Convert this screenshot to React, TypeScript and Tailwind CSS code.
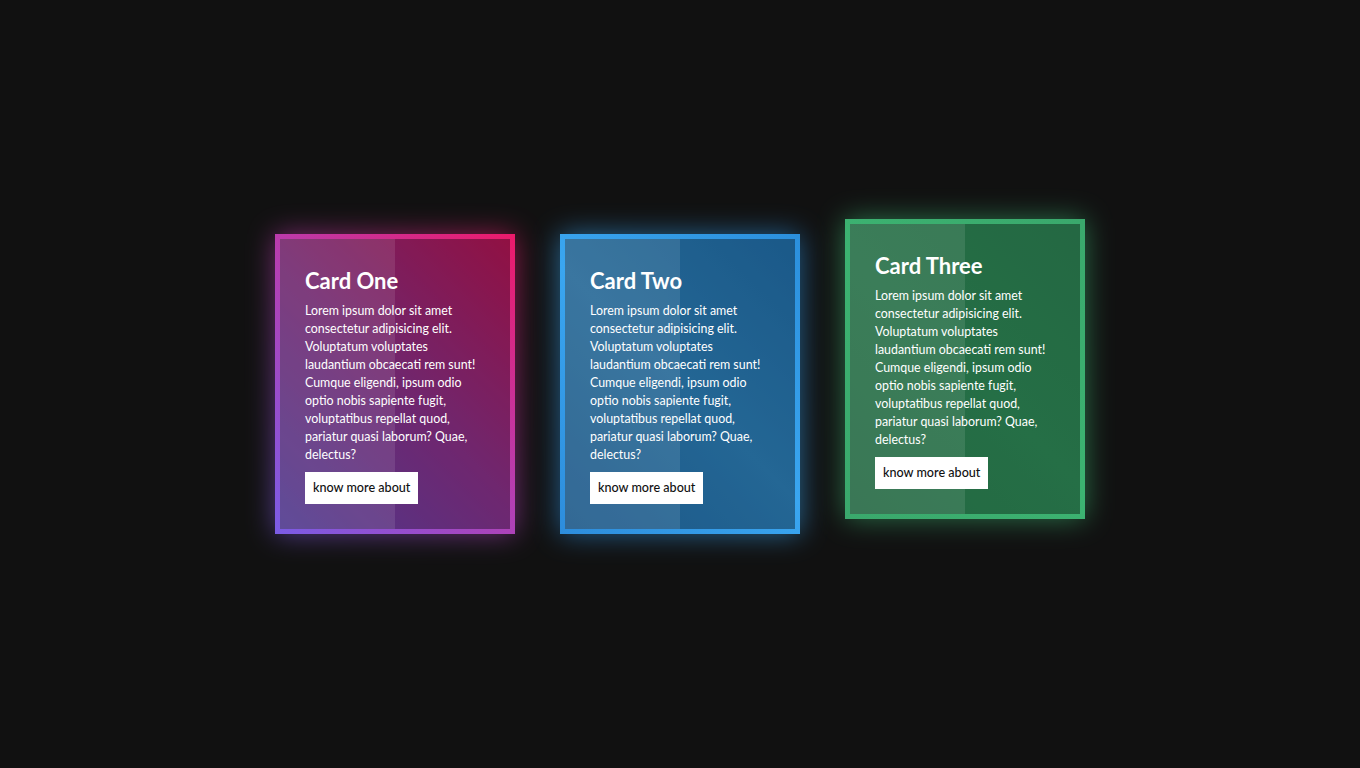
import React from 'react';

type Card = {
    title: string;
    gradient: string;
    lift: string;
};

const cards: Card[] = [
    {
        title: 'Card One',
        gradient: 'bg-[linear-gradient(45deg,#7b5ce6,#b43fb3_50%,#ec1a6a)]',
        lift: '',
    },
    {
        title: 'Card Two',
        gradient: 'bg-[linear-gradient(45deg,#2d8ddc,#3aa6f0_50%,#2b8fdc)]',
        lift: '',
    },
    {
        title: 'Card Three',
        gradient: 'bg-[linear-gradient(45deg,#3aa86c,#3cb371_50%,#3aa86c)]',
        lift: '-translate-y-[15px]',
    },
];

const lines = [
    'Lorem ipsum dolor sit amet',
    'consectetur adipisicing elit.',
    'Voluptatum voluptates',
    'laudantium obcaecati rem sunt!',
    'Cumque eligendi, ipsum odio',
    'optio nobis sapiente fugit,',
    'voluptatibus repellat quod,',
    'pariatur quasi laborum? Quae,',
    'delectus?',
];

const GlassCard: React.FC<{ card: Card }> = ({ card }) => (
    <div className={`relative w-[240px] h-[300px] ${card.lift}`}>
        {/* glow behind the card */}
        <div className={`absolute inset-0 ${card.gradient} blur-[14px] opacity-60`} />
        <div className={`absolute inset-0 ${card.gradient}`} />
        <div className="absolute inset-[5px] bg-black/[0.38] overflow-hidden">
            <div className="absolute left-0 top-0 h-full w-1/2 bg-white/10" />
        </div>
        <div className="relative h-full flex flex-col justify-center pl-[30px] pr-[20px] text-white">
            <h2 className="pt-[3px] text-[22px] leading-[28px] font-bold">{card.title}</h2>
            <p className="mt-[7px] text-[12.4px] leading-[18px] whitespace-nowrap">
                {lines.map((l, i) => (
                    <React.Fragment key={i}>
                        {l}
                        {i < lines.length - 1 && <br />}
                    </React.Fragment>
                ))}
            </p>
            <div className="mt-[8px]">
                <a className="inline-flex items-center h-[32px] px-[8px] bg-white text-[#111] text-[12.6px] font-medium">
                    know more about
                </a>
            </div>
        </div>
    </div>
);

const App: React.FC = () => {
    return (
        <div
            className="w-full min-h-[768px] bg-[#111111] flex items-center justify-center gap-[45px]"
            style={{ fontFamily: 'Lato, "Open Sans", sans-serif' }}
        >
            {cards.map((c) => (
                <GlassCard key={c.title} card={c} />
            ))}
        </div>
    );
};

export default App;
